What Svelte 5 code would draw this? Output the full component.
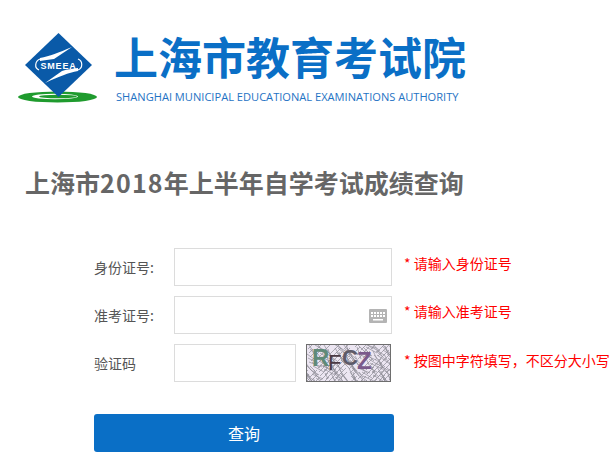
<script lang="ts">
  // scribbled noise behind the captcha letters
  const noise = Array.from({ length: 260 }, (_, i) => {
    const x = (i * 37) % 95 - 5;
    const y = (i * 23) % 41 - 2;
    const dx = i % 3 === 0 ? -((i * 13) % 9) - 4 : ((i * 13) % 11) + 3;
    const dy = ((i * 7) % 9) + 4;
    return `M${x} ${y}l${dx} ${dy}`;
  }).join('');
</script>

<div class="page">
  <header class="brand">
    <svg class="logo" viewBox="0 0 82 72" width="82" height="72">
      <ellipse cx="41.5" cy="65" rx="39.5" ry="5.5" fill="#1f9b2e" />
      <ellipse cx="39" cy="64.5" rx="23" ry="2.8" fill="#fff" />
      <ellipse cx="42" cy="64.5" rx="19" ry="1.8" fill="#1f9b2e" />
      <path d="M42.5 1 L76 33 L42.5 65 L9 33 Z" fill="#0a5aa8" />
      <path d="M24 26 C34 24 42 21 56 15 L38 27 C33 28 28 28 24 29 Z" fill="#fff" />
      <path d="M62 39 C52 41 44 44 29 51 L46 39 C52 37 56 37 62 36 Z" fill="#fff" />
      <path d="M24 27 C19 29 18 36 23 38 M62 38 C67 36 67 29 62 27" fill="none" stroke="#fff" stroke-width="1.2" />
      <text x="42.5" y="36.5" text-anchor="middle" class="logo-text">SMEEA</text>
    </svg>
    <div class="brand-text">
      <div class="brand-cn">上海市教育考试院</div>
      <div class="brand-en">SHANGHAI MUNICIPAL EDUCATIONAL EXAMINATIONS AUTHORITY</div>
    </div>
  </header>

  <h1 class="title">上海市<span class="year">2018</span>年上半年自学考试成绩查询</h1>

  <form class="form" onsubmit={(e) => e.preventDefault()}>
    <div class="row">
      <label class="label" for="id-no">身份证号:</label>
      <input id="id-no" class="input" type="text" />
      <span class="hint">* 请输入身份证号</span>
    </div>

    <div class="row">
      <label class="label" for="exam-no">准考证号:</label>
      <div class="input-wrap">
        <input id="exam-no" class="input" type="text" />
        <svg class="keyboard" viewBox="0 0 18 14" width="18" height="14">
          <rect width="18" height="14" rx="1" fill="#b4b4b4" />
          <path d="M2 3h2v2H2zM5 3h2v2H5zM8 3h2v2H8zM11 3h2v2h-2zM14 3h2v2h-2zM2 6h2v2H2zM5 6h2v2H5zM8 6h2v2H8zM11 6h2v2h-2zM14 6h2v2h-2zM4 10h10v1.5H4z" fill="#fff" />
        </svg>
      </div>
      <span class="hint">* 请输入准考证号</span>
    </div>

    <div class="row">
      <label class="label" for="captcha">验证码</label>
      <input id="captcha" class="input short" type="text" />
      <svg class="captcha" viewBox="0 0 85 38" width="85" height="38">
        <rect width="85" height="38" fill="#ece6f2" />
        <path d={noise} stroke="#8e8c96" stroke-width="0.7" fill="none" />
        <text x="6" y="22" class="c1">R</text>
        <text x="22" y="26" class="c2">F</text>
        <text x="36" y="21" class="c3">C</text>
        <text x="51" y="25" class="c4">Z</text>
        <rect x="0.5" y="0.5" width="84" height="37" fill="none" stroke="#6e6e6e" />
      </svg>
      <span class="hint captcha-hint">* 按图中字符填写，不区分大小写</span>
    </div>

    <button class="submit" type="submit">查询</button>
  </form>
</div>

<style>
  :global(body) {
    background: #fff;
  }

  .page {
    width: 616px;
    height: 472px;
    overflow: hidden;
    box-sizing: border-box;
    padding-top: 32px;
    font-family: 'Noto Sans CJK SC', 'Open Sans', sans-serif;
  }

  .brand {
    display: flex;
    align-items: flex-start;
    padding-left: 16px;
  }

  .logo {
    flex: none;
  }

  .logo-text {
    font-family: 'Liberation Sans', sans-serif;
    font-size: 9px;
    font-weight: 700;
    fill: #fff;
    letter-spacing: 0.8px;
  }

  .brand-text {
    margin-left: 16px;
  }

  .brand-cn {
    margin-top: -1px;
    font-size: 44px;
    line-height: 50px;
    font-weight: 700;
    color: #0a6fc6;
  }

  .brand-en {
    margin-top: 9px;
    margin-left: 2px;
    font-family: 'Open Sans', sans-serif;
    font-size: 11.1px;
    line-height: 14px;
    color: #1f73c4;
    white-space: nowrap;
  }

  .title {
    margin: 60px 0 0 25px;
    font-size: 25px;
    line-height: 36px;
    font-weight: 700;
    color: #666;
    white-space: nowrap;
  }

  .year {
    letter-spacing: 1.2px;
  }

  .form {
    display: flex;
    flex-direction: column;
    gap: 10px;
    margin-top: 48px;
    padding-left: 94px;
  }

  .row {
    display: flex;
    align-items: center;
    height: 38px;
  }

  .label {
    width: 80px;
    flex: none;
    font-size: 14px;
    color: #555;
  }

  .input-wrap {
    position: relative;
    display: flex;
  }

  .input {
    box-sizing: border-box;
    width: 218px;
    height: 38px;
    padding: 0 8px;
    border: 1px solid #dcdcdc;
    background: #fff;
    outline: none;
  }

  .input.short {
    width: 122px;
  }

  .keyboard {
    position: absolute;
    right: 5px;
    top: 13px;
  }

  .captcha {
    flex: none;
    margin-left: 10px;
  }

  .captcha text {
    font-family: 'Liberation Sans', sans-serif;
  }

  .c1 { fill: #5f8a78; font-weight: 700; font-size: 24px; }
  .c2 { fill: #4a3a44; font-size: 22px; }
  .c3 { fill: #5d5a68; font-weight: 700; font-size: 22px; }
  .c4 { fill: #7a5a8c; font-weight: 700; font-size: 24px; }

  .hint {
    margin-left: 12px;
    margin-top: -8px;
    font-size: 14px;
    color: #f00;
    white-space: nowrap;
  }

  .captcha-hint {
    margin-left: 13px;
    margin-top: -6px;
  }

  .submit {
    width: 300px;
    height: 38px;
    margin-top: 22px;
    border: none;
    border-radius: 3px;
    background: #0a6fc6;
    color: #fff;
    font-family: inherit;
    font-size: 16px;
  }
</style>
